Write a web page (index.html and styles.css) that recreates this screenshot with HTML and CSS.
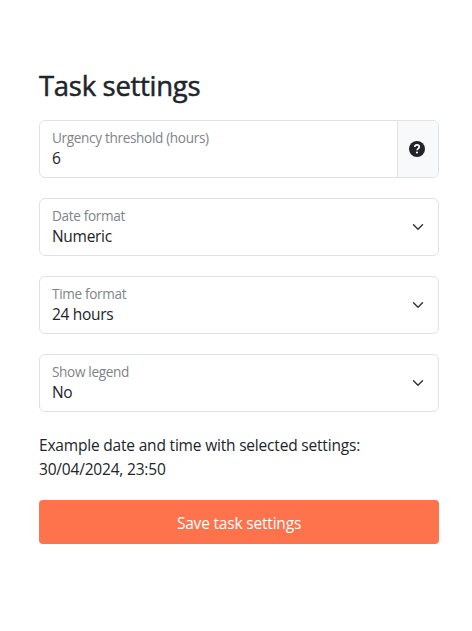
FILE: index.html
```html
<!DOCTYPE html>
<html lang="en">
<head>
<meta charset="utf-8">
<title>Task settings</title>
<link rel="stylesheet" href="styles.css">
</head>
<body>
<form class="settings">
  <h1>Task settings</h1>
  <div class="field">
    <div class="field-body"><span class="label">Urgency threshold (hours)</span><span class="value">6</span></div>
    <div class="help"><svg width="16" height="16" viewBox="0 0 16 16"><circle cx="8" cy="8" r="8" fill="#212529"/><path d="M5.8 6.1C5.8 4.6 6.7 3.9 8 3.9s2.2.8 2.2 2c0 1.7-2.1 1.7-2.1 3.4" fill="none" stroke="#fff" stroke-width="1.7"/><circle cx="8" cy="11.5" r="1.05" fill="#fff"/></svg></div>
  </div>
  <div class="field select">
    <div class="field-body"><span class="label">Date format</span><span class="value">Numeric</span></div>
    <svg class="chevron" viewBox="0 0 16 16"><path d="m2 5 6 6 6-6"/></svg>
  </div>
  <div class="field select">
    <div class="field-body"><span class="label">Time format</span><span class="value">24 hours</span></div>
    <svg class="chevron" viewBox="0 0 16 16"><path d="m2 5 6 6 6-6"/></svg>
  </div>
  <div class="field select">
    <div class="field-body"><span class="label">Show legend</span><span class="value">No</span></div>
    <svg class="chevron" viewBox="0 0 16 16"><path d="m2 5 6 6 6-6"/></svg>
  </div>
  <p class="example">Example date and time with selected settings:<br>30/04/2024, 23:50</p>
  <button type="button">Save task settings</button>
</form>
</body>
</html>
```
FILE: styles.css
```css
* { box-sizing: border-box; }
body { margin: 0; background: #fff; color: #212529; font: 15.5px/24px "Open Sans", "Noto Sans", sans-serif; letter-spacing: -.19px; }
.settings { width: 400px; margin-left: 39px; padding-top: 69px; }
h1 { margin: 0 0 17px; font-size: 27.5px; line-height: 34px; font-weight: 500; letter-spacing: -.3px; -webkit-text-stroke: .5px #212529; }
.field { display: flex; align-items: center; height: 58px; margin-bottom: 20px; border: 1px solid #dee2e6; border-radius: 6px; overflow: hidden; }
.field-body { flex: 1; padding: 0 0 2px 12px; }
.field-body span { display: block; white-space: nowrap; }
.label { font-size: 13.6px; line-height: 20px; color: #808488; letter-spacing: -.34px; }
.value { line-height: 21px; letter-spacing: -.3px; }
.select .field-body { padding-bottom: 3px; }
.select .value { line-height: 20px; }
.help { width: 41px; height: 56px; padding-right: 2px; display: grid; place-items: center; background: #f8f9fa; border-left: 1px solid #dee2e6; }
.chevron { width: 12px; height: 12px; margin-right: 14px; fill: none; stroke: #343a40; stroke-width: 2; stroke-linecap: round; stroke-linejoin: round; }
.example { margin: 0; padding: 1px 0 19px; }
button { display: block; width: 100%; height: 44px; padding: 1px 0 0; border: 0; border-radius: 4px; background: #ff734c; color: #fff; font: inherit; letter-spacing: inherit; }
```
